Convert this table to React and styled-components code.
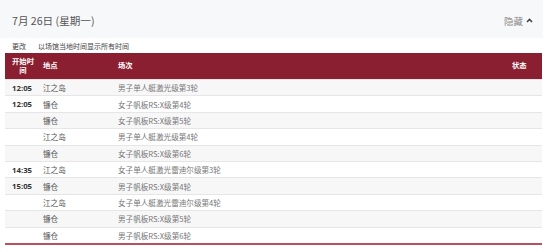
import React from "react";
import styled, { createGlobalStyle } from "styled-components";

const GlobalStyle = createGlobalStyle`
  body {
    margin: 0;
    background: #ffffff;
    font-family: "Open Sans", "Noto Sans CJK SC", sans-serif;
  }
`;

const rows = [
  { time: "12:05", venue: "江之岛", event: "男子单人艇激光级第3轮" },
  { time: "12:05", venue: "镰仓", event: "女子帆板RS:X级第4轮" },
  { time: "", venue: "镰仓", event: "女子帆板RS:X级第5轮" },
  { time: "", venue: "江之岛", event: "男子单人艇激光级第4轮" },
  { time: "", venue: "镰仓", event: "女子帆板RS:X级第6轮" },
  { time: "14:35", venue: "江之岛", event: "女子单人艇激光雷迪尔级第3轮" },
  { time: "15:05", venue: "镰仓", event: "男子帆板RS:X级第4轮" },
  { time: "", venue: "江之岛", event: "女子单人艇激光雷迪尔级第4轮" },
  { time: "", venue: "镰仓", event: "男子帆板RS:X级第5轮" },
  { time: "", venue: "镰仓", event: "男子帆板RS:X级第6轮" },
];

const App = () => {
  return (
    <Page>
      <GlobalStyle />
      <DayHeader>
        <Title>7月 26日 (星期一)</Title>
        <Toggle>
          隐藏
          <svg width="7" height="5" viewBox="0 0 7 5">
            <path d="M1 4 L3.5 1.5 L6 4" fill="none" stroke="#444" strokeWidth="1.6" />
          </svg>
        </Toggle>
      </DayHeader>
      <TimeBar>
        <span>更改</span>
        <span>以场馆当地时间显示所有时间</span>
      </TimeBar>
      <Table>
        <HeadRow>
          <HeadCell first>开始时间</HeadCell>
          <HeadCell>地点</HeadCell>
          <HeadCell>场次</HeadCell>
          <HeadCell>状态</HeadCell>
        </HeadRow>
        {rows.map((r, i) => (
          <Row key={i} striped={i % 2 === 0}>
            <TimeCell>{r.time}</TimeCell>
            <Cell>{r.venue}</Cell>
            <EventCell>{r.event}</EventCell>
            <Cell />
          </Row>
        ))}
      </Table>
    </Page>
  );
};

export default App;

const Page = styled.div`
  width: 543px;
`;

const DayHeader = styled.div`
  height: 38px;
  box-sizing: border-box;
  padding: 3px 10px 0 12px;
  background: #f7f8f9;
  display: flex;
  align-items: center;
  justify-content: space-between;
`;

const Title = styled.div`
  font-family: "Noto Sans CJK SC", sans-serif;
  font-size: 10.6px;
  color: #555555;
`;

const Toggle = styled.div`
  display: flex;
  align-items: center;
  gap: 3px;
  font-family: "Noto Sans CJK SC", sans-serif;
  font-size: 9.5px;
  color: #888888;

  svg {
    margin-top: -1px;
  }
`;

const TimeBar = styled.div`
  height: 15px;
  display: flex;
  align-items: center;
  gap: 12px;
  padding-left: 12px;
  font-family: "Noto Sans CJK SC", sans-serif;
  font-size: 7px;
  color: #444444;
`;

const Table = styled.div`
  margin-left: 5px;
  width: 537px;
  border-bottom: 2px solid #b8505f;
`;

const grid = `
  display: grid;
  grid-template-columns: 31px 75px 1fr 37px;
`;

const HeadRow = styled.div`
  ${grid}
  height: 26px;
  background: #8a1f31;
  align-items: center;
`;

const HeadCell = styled.div`
  padding: ${(p) => (p.first ? "0 1px 0 6px" : "0 7px")};
  font-family: "Noto Sans CJK SC", sans-serif;
  font-weight: 700;
  font-size: 7.3px;
  line-height: 9.5px;
  color: #ffffff;
  text-align: ${(p) => (p.first ? "center" : "left")};
`;

const Row = styled.div`
  ${grid}
  height: 16.4px;
  box-sizing: border-box;
  align-items: center;
  background: ${(p) => (p.striped ? "#f7f7f7" : "#ffffff")};
  border-top: 1px solid #e6e6e6;

  &:first-of-type {
    border-top: none;
  }
`;

const Cell = styled.div`
  padding: 0 7px;
  font-family: "Noto Sans CJK SC", sans-serif;
  font-size: 7.6px;
  color: #555555;
`;

const TimeCell = styled(Cell)`
  font-family: "Open Sans", sans-serif;
  font-weight: 700;
  font-size: 7.8px;
  color: #333333;
`;

const EventCell = styled(Cell)`
  color: #777777;
`;
